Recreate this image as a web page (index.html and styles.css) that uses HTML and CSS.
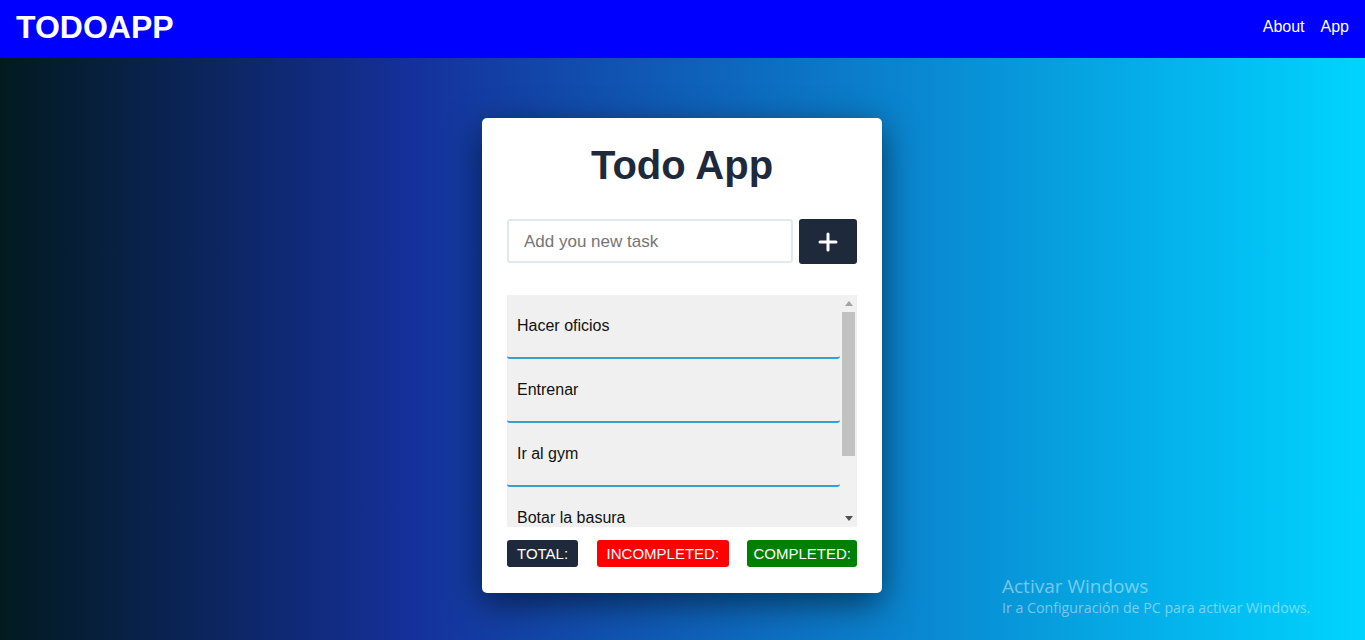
FILE: index.html
```html
<!DOCTYPE html>
<html lang="es">
<head>
<meta charset="utf-8">
<title>TODOAPP</title>
<link rel="stylesheet" href="styles.css">
</head>
<body>
<header class="navbar">
  <h1 class="brand">TODOAPP</h1>
  <nav class="nav-links">
    <a href="#" class="nav-link">About</a>
    <a href="#" class="nav-link">App</a>
  </nav>
</header>
<main class="main">
  <section class="card">
    <h2 class="card-title">Todo App</h2>
    <form class="add-row">
      <input class="task-input" type="text" placeholder="Add you new task">
      <button class="add-btn" type="button" aria-label="Add">
        <svg width="20" height="20" viewBox="0 0 20 20"><path d="M10 2v16M2 10h16" stroke="#fff" stroke-width="3" stroke-linecap="round"/></svg>
      </button>
    </form>
    <div class="list-box">
      <ul class="task-list">
        <li class="task">Hacer oficios</li>
        <li class="task">Entrenar</li>
        <li class="task">Ir al gym</li>
        <li class="task">Botar la basura</li>
      </ul>
      <div class="scrollbar" aria-hidden="true">
        <div class="sb-btn">
          <svg width="8" height="5" viewBox="0 0 8 5"><path d="M4 0L8 5H0z" fill="#a3a3a3"/></svg>
        </div>
        <div class="sb-track"><div class="sb-thumb"></div></div>
        <div class="sb-btn">
          <svg width="8" height="5" viewBox="0 0 8 5"><path d="M0 0H8L4 5z" fill="#505050"/></svg>
        </div>
      </div>
    </div>
    <div class="stats">
      <span class="badge badge-total">TOTAL:</span>
      <span class="badge badge-incomplete">INCOMPLETED:</span>
      <span class="badge badge-complete">COMPLETED:</span>
    </div>
  </section>
  <div class="watermark">
    <div class="wm-title">Activar Windows</div>
    <div class="wm-sub">Ir a Configuración de PC para activar Windows.</div>
  </div>
</main>
</body>
</html>
```
FILE: styles.css
```css
* { box-sizing: border-box; }
html, body { margin: 0; padding: 0; height: 100%; }
body {
  font-family: "Liberation Sans", Arial, sans-serif;
  display: flex;
  flex-direction: column;
  overflow: hidden;
}
.navbar {
  height: 58px;
  background: #0000ff;
  display: flex;
  align-items: center;
  justify-content: space-between;
  padding: 0 16px;
  flex-shrink: 0;
}
.brand {
  margin: 0;
  color: #fff;
  font-size: 32px;
  font-weight: bold;
  line-height: 1;
  position: relative;
  top: -2px;
}
.nav-links { display: flex; gap: 16px; }
.nav-link {
  color: #fff;
  text-decoration: none;
  font-size: 16px;
  position: relative;
  top: -2px;
}
.main {
  flex: 1;
  position: relative;
  background: linear-gradient(90deg, #021a1f 0%, #15309a 30%, #00d4ff 100%);
  display: flex;
  justify-content: center;
  align-items: flex-start;
  padding: 60px 1px 0 0;
}
.card {
  width: 400px;
  height: 475px;
  background: #fff;
  border-radius: 5px;
  box-shadow: 0 10px 35px rgba(0, 0, 0, 0.55);
  padding: 24px 25px 0;
  display: flex;
  flex-direction: column;
}
.card-title {
  margin: 0;
  text-align: center;
  font-size: 40px;
  line-height: 46px;
  font-weight: bold;
  color: #1e293b;
}
.add-row {
  margin: 31px 0 0;
  display: flex;
  gap: 6px;
  height: 45px;
}
.task-input {
  width: 286px;
  height: 44px;
  border: 2px solid #e2e8f0;
  border-radius: 3px;
  padding: 2px 15px 0;
  font-family: inherit;
  font-size: 17px;
  color: #333;
  outline: none;
}
.task-input::placeholder { color: #757575; }
.add-btn {
  width: 58px;
  height: 45px;
  background: #1e293b;
  border: none;
  border-radius: 3px;
  display: flex;
  align-items: center;
  justify-content: center;
  padding: 0;
}
.list-box {
  margin-top: 31px;
  height: 232px;
  background: #f0f0f0;
  display: flex;
}
.task-list {
  list-style: none;
  margin: 0;
  padding: 0;
  flex: 1;
  overflow: hidden;
}
.task {
  padding: 22px 10px 22px;
  line-height: 18px;
  font-size: 16px;
  color: #111;
  border-bottom: 2px solid #379ecf;
  border-radius: 0 0 3px 3px;
}
.scrollbar {
  width: 17px;
  display: flex;
  flex-direction: column;
  background: #f1f1f1;
}
.sb-btn {
  height: 17px;
  display: flex;
  align-items: center;
  justify-content: center;
}
.sb-track {
  flex: 1;
  padding: 0 2px;
}
.sb-thumb {
  height: 144px;
  background: #c1c1c1;
}
.stats {
  margin-top: 13px;
  display: flex;
  justify-content: space-between;
}
.badge {
  height: 27px;
  line-height: 27px;
  padding: 0 10px;
  font-size: 15px;
  color: #fff;
  border-radius: 3px;
  white-space: nowrap;
}
.badge-total { background: #1e293b; }
.badge-incomplete { background: #ff0000; }
.badge-complete { background: #008000; padding: 0 6px; }
.watermark {
  position: absolute;
  left: 1002px;
  top: 516px;
  color: rgba(255, 255, 255, 0.45);
  font-family: "Open Sans", "Noto Sans", sans-serif;
}
.wm-title { font-size: 19px; line-height: 24px; }
.wm-sub { font-size: 14.2px; line-height: 20px; }
```
